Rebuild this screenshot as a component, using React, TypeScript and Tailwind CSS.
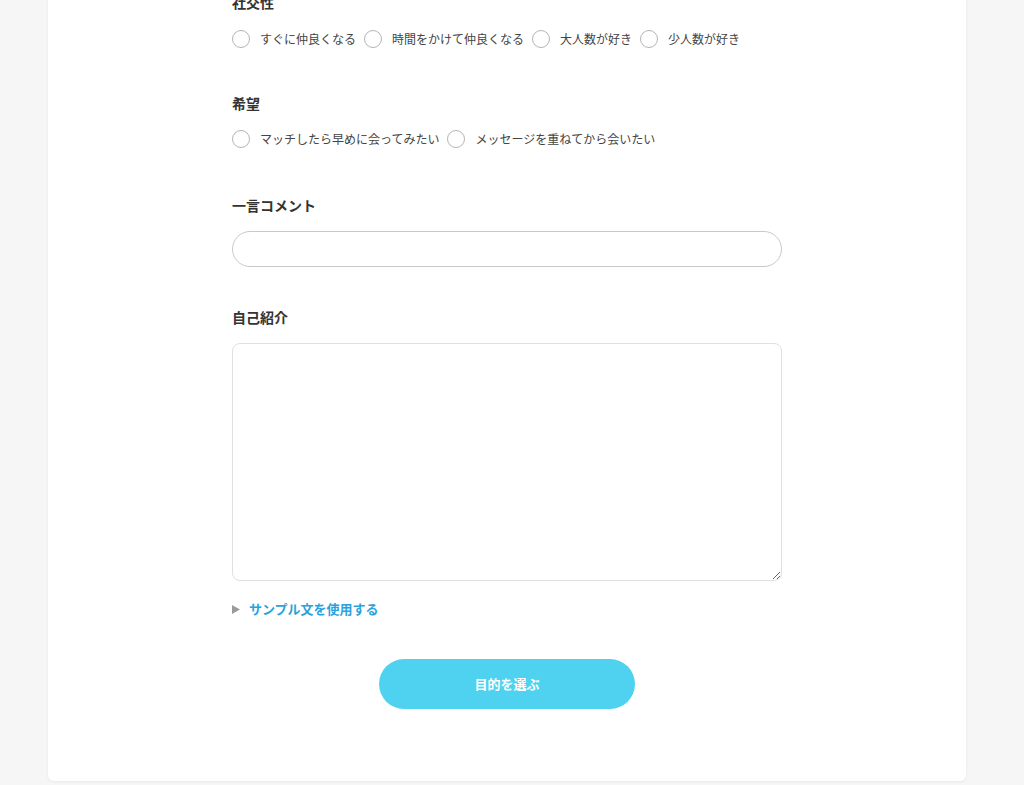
import React from 'react';

const sociality = ['すぐに仲良くなる', '時間をかけて仲良くなる', '大人数が好き', '少人数が好き'];
const hopes = ['マッチしたら早めに会ってみたい', 'メッセージを重ねてから会いたい'];

function RadioRow({ name, options }: { name: string; options: string[] }) {
  return (
    <div className="flex items-center h-[18px]">
      {options.map((o) => (
        <label key={o} className="flex items-center cursor-pointer mr-[8px]">
          <span className="w-[18px] h-[18px] rounded-full border border-[#b5b5b5] bg-white flex-shrink-0" />
          <input type="radio" name={name} className="hidden" />
          <span className="ml-[10px] text-[12px] leading-[18px] text-[#444] font-normal">{o}</span>
        </label>
      ))}
    </div>
  );
}

function Label({ children }: { children: React.ReactNode }) {
  return <h3 className="text-[14px] leading-[20px] font-bold text-[#333]">{children}</h3>;
}

export default function App() {
  return (
    <div
      className="min-h-screen bg-[#f6f6f6] flex flex-col pb-[4px]"
      style={{ fontFamily: '"Noto Sans CJK JP", "Noto Sans", sans-serif' }}
    >
      <div className="-mt-[48px] ml-[48px] w-[918px] bg-white rounded-[6px] shadow-[0_1px_3px_rgba(0,0,0,0.06)] pt-[40px] pb-[72px]">
        <div className="w-[550px] mx-auto">
          {/* 社交性 */}
          <Label>社交性</Label>
          <div className="mt-[18px]">
            <RadioRow name="social" options={sociality} />
          </div>

          {/* 希望 */}
          <div className="mt-[45px]">
            <Label>希望</Label>
          </div>
          <div className="mt-[17px]">
            <RadioRow name="hope" options={hopes} />
          </div>

          {/* 一言コメント */}
          <div className="mt-[47px]">
            <Label>一言コメント</Label>
          </div>
          <input
            type="text"
            className="mt-[16px] block w-full h-[36px] rounded-full border border-[#c9c9c9] px-4 text-[13px] outline-none"
          />

          {/* 自己紹介 */}
          <div className="mt-[40px]">
            <Label>自己紹介</Label>
          </div>
          <textarea className="mt-[16px] block w-full h-[238px] rounded-[8px] border border-[#e0e0e0] p-3 text-[13px] outline-none resize-y" />

          <div className="mt-[19px] flex items-center h-[18px]">
            <svg className="w-[8px] h-[9px] mr-[9px]" viewBox="0 0 8 9">
              <path d="M0 0 L8 4.5 L0 9 Z" fill="#9a9a9a" />
            </svg>
            <span className="text-[13px] font-bold text-[#29a3dc]">サンプル文を使用する</span>
          </div>

          <div className="mt-[41px] flex justify-center">
            <button className="w-[256px] h-[50px] rounded-full bg-[#4fd2f0] text-white text-[13px] font-bold">
              目的を選ぶ
            </button>
          </div>
        </div>
      </div>
    </div>
  );
}
